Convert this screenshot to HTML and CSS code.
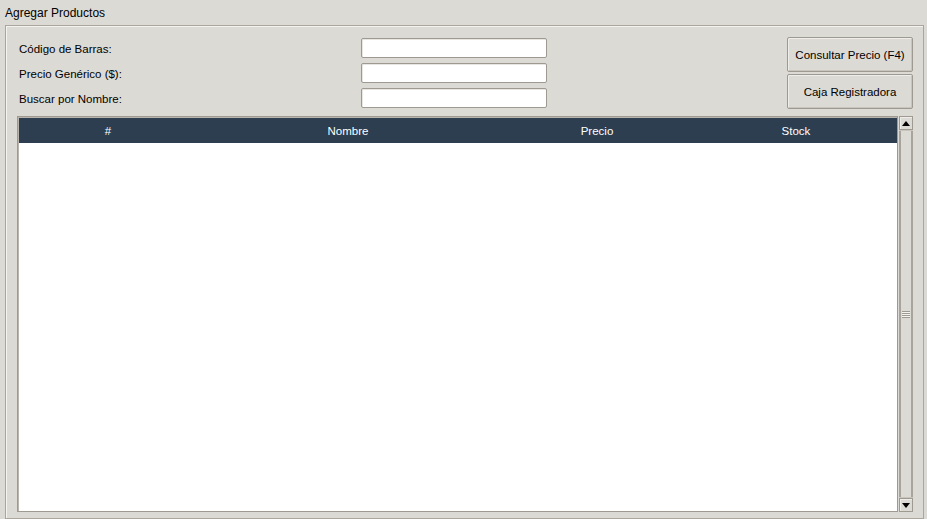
FILE: index.html
```html
<!DOCTYPE html>
<html lang="es">
<head>
    <meta charset="UTF-8">
    <meta name="viewport" content="width=device-width, initial-scale=1.0">
    <title>Agregar Productos</title>
    <link rel="stylesheet" href="styles.css">
</head>
<body>
    <div class="group-title">Agregar Productos</div>
    <div class="group">
        <div class="top-row">
            <div class="search-form">
                <label for="codigo">Código de Barras:</label>
                <input type="text" id="codigo">
                <label for="generico">Precio Genérico ($):</label>
                <input type="text" id="generico">
                <label for="nombre">Buscar por Nombre:</label>
                <input type="text" id="nombre">
            </div>
            <div class="actions">
                <button>Consultar Precio (F4)</button>
                <button>Caja Registradora</button>
            </div>
        </div>
        <div class="table-area">
            <div class="product-table">
                <div class="table-head">
                    <div>#</div>
                    <div>Nombre</div>
                    <div>Precio</div>
                    <div>Stock</div>
                </div>
                <div class="table-body" id="table-body"></div>
            </div>
            <div class="scrollbar">
                <div class="scroll-btn"><span class="arrow-up"></span></div>
                <div class="scroll-trough">
                    <div class="scroll-thumb"><span class="grip"></span></div>
                </div>
                <div class="scroll-btn"><span class="arrow-down"></span></div>
            </div>
        </div>
    </div>
</body>
</html>
```
FILE: styles.css
```css
body {
    font-family: "Liberation Sans", Arial, sans-serif;
    font-size: 11.5px;
    background-color: #dcdad5;
    color: #000;
    margin: 0;
    padding: 0;
    height: 519px;
    display: flex;
    flex-direction: column;
    overflow: hidden;
}
.group-title {
    font-size: 12px;
    padding: 6px 0 0 5px;
    height: 25px;
    box-sizing: border-box;
}
.group {
    flex: 1;
    margin: 0 3px 0 5px;
    border: 1px solid #aaa69d;
    box-shadow: inset 1px 1px 0 #f4f3f0;
    padding: 11px 10px 6px 11px;
    display: flex;
    flex-direction: column;
    min-height: 0;
}
.top-row {
    display: flex;
    justify-content: space-between;
    align-items: flex-start;
}
.search-form {
    display: grid;
    grid-template-columns: 342px 186px;
    grid-auto-rows: 20px;
    row-gap: 5px;
    align-items: center;
    padding-top: 1px;
    padding-left: 2px;
}
.search-form label {
    padding-top: 2px;
}
.search-form input {
    height: 20px;
    box-sizing: border-box;
    margin: 0;
    border: 1px solid #9e9a91;
    border-radius: 2px;
    box-shadow: inset 1px 1px 0 #e8e6e2;
    background: #fff;
    padding: 0 3px;
}
.actions {
    display: flex;
    flex-direction: column;
    gap: 2px;
}
.actions button {
    width: 126px;
    height: 35px;
    font-family: inherit;
    font-size: 11.5px;
    background-color: #dcdad5;
    border: 1px solid #9e9a91;
    border-radius: 2px;
    box-shadow: inset 1px 1px 0 #eeede9, inset -1px -1px 0 #c8c5be;
    padding: 0;
    color: #000;
}
.table-area {
    flex: 1;
    display: flex;
    margin-top: 7px;
    min-height: 0;
}
.product-table {
    flex: 1;
    border: 1px solid #9e9a91;
    box-shadow: inset 1px 1px 0 #b9b5ad;
    background: #fff;
    padding: 1px 0 0 1px;
    display: flex;
    flex-direction: column;
}
.table-head {
    display: grid;
    grid-template-columns: 178px 302px 196px 1fr;
    height: 25px;
    background-color: #2c3e50;
    color: #fff;
    align-items: center;
    text-align: center;
}
.table-body {
    flex: 1;
}
.scrollbar {
    width: 14px;
    margin-left: 1px;
    display: flex;
    flex-direction: column;
    background: #dcdad5;
}
.scroll-btn {
    height: 14px;
    box-sizing: border-box;
    border: 1px solid #9e9a91;
    box-shadow: inset 1px 1px 0 #eeede9;
    display: flex;
    align-items: center;
    justify-content: center;
}
.arrow-up,
.arrow-down {
    width: 0;
    height: 0;
    border-left: 4px solid transparent;
    border-right: 4px solid transparent;
}
.arrow-up {
    border-bottom: 5px solid #000;
}
.arrow-down {
    border-top: 5px solid #000;
}
.scroll-trough {
    flex: 1;
    background: #c9c5bd;
    display: flex;
}
.scroll-thumb {
    flex: 1;
    margin: 1px 0;
    border-left: 2px solid #a8a49b;
    border-right: 2px solid #a8a49b;
    background: #dcdad5;
    display: flex;
    align-items: center;
    justify-content: center;
}
.grip {
    width: 8px;
    height: 7px;
    background: repeating-linear-gradient(#9e9a91 0 1px, #f4f3f0 1px 2px);
}
```
